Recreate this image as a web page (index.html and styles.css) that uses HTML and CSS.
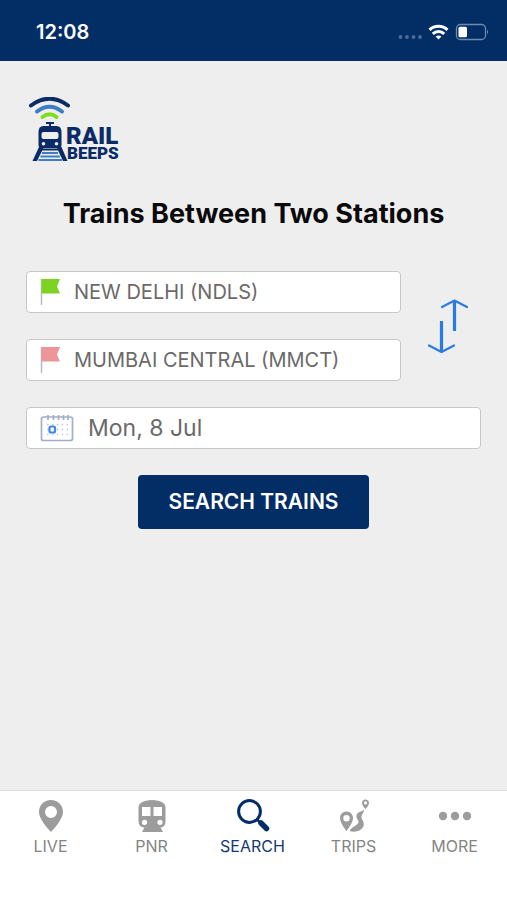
FILE: index.html
```html
<!DOCTYPE html>
<html lang="en">
<head>
<meta charset="utf-8">
<meta name="viewport" content="width=device-width, initial-scale=1">
<title>Rail Beeps</title>
<link rel="stylesheet" href="styles.css">
</head>
<body>
<header class="status">
  <span class="status-time">12:08</span>
  <svg class="status-icons" width="94" height="20" viewBox="0 0 94 20" aria-hidden="true">
    <g fill="#4d6c9b"><circle cx="5.500" cy="15" r="1.900"/><circle cx="12" cy="15" r="1.900"/><circle cx="18.500" cy="15" r="1.900"/><circle cx="25" cy="15" r="1.900"/></g>
    <g fill="none" stroke="#fff" stroke-width="3"><path d="M34.500 7.800a13 13 0 0 1 18 0"/><path d="M37.800 11.900a8.200 8.200 0 0 1 11.400 0"/></g>
    <path d="M40.600 14.600a4.500 4.500 0 0 1 5.800 0l-2.900 3z" fill="#fff"/>
    <rect x="61.500" y="2.500" width="29" height="15" rx="4" fill="none" stroke="#7189b0" stroke-width="1.300"/>
    <rect x="63.500" y="4.700" width="8.500" height="10.600" rx="1.500" fill="#fff"/>
    <path d="M92 7.500q2 2.500 0 5z" fill="#7189b0"/>
  </svg>
</header>

<main class="page">
  <svg class="logo" width="94" height="68" viewBox="0 0 94 68" role="img" aria-label="Rail Beeps">
    <g fill="none" stroke-width="4" stroke-linecap="round">
      <path d="M3 8.500Q21.500 -5 40 8.500" stroke="#0a2b66"/>
      <path d="M9 14.500Q21.500 5 34 14.500" stroke="#3e7dc2"/>
      <path d="M14.500 20Q21.500 14.500 28.500 20" stroke="#80de20"/>
    </g>
    <g fill="#0a2b66">
      <path d="M18 25h8v2h-3v3h-2v-3h-3z"/>
      <path fill-rule="evenodd" d="M15.500 29h13q5 0 5 6v13q0 3-3 3h-17q-3 0-3-3V35q0-6 5-6zM15.500 35q-2 0-2 2v3q0 2 2 2h13q2 0 2-2v-3q0-2-2-2zM15.500 45a1.800 1.800 0 0 0 0 3.600 1.800 1.800 0 0 0 0-3.600zM28.500 45a1.800 1.800 0 0 0 0 3.600 1.800 1.800 0 0 0 0-3.600z"/>
      <path d="M11 50h5L9 64H4.500zM28.500 50h5l6 14H35z"/>
    </g>
    <path d="M14 52.500h16" stroke="#0a2b66" stroke-width="2"/>
    <path d="M14 56h16M12.500 59.500h19.500M10.500 63h23.500" stroke="#3e7dc2" stroke-width="2"/>
    <text class="logo-rail" x="38" y="47">RAIL</text>
    <text class="logo-beeps" x="39" y="62">BEEPS</text>
  </svg>

  <h1 class="title">Trains Between Two Stations</h1>

  <form class="search">
    <div class="route">
      <div class="stations">
        <label class="field">
          <svg width="20" height="28" viewBox="0 0 20 28" aria-hidden="true"><path d="M1.500 1v26" stroke="#b4b9c6" stroke-width="1.500"/><path d="M1.500 1H20l-3 7.500 3 7H1.500z" fill="#7ed321"/></svg>
          <input class="field-input" type="text" value="NEW DELHI (NDLS)" aria-label="From station">
        </label>
        <label class="field">
          <svg width="20" height="28" viewBox="0 0 20 28" aria-hidden="true"><path d="M1.500 1v26" stroke="#b4b9c6" stroke-width="1.500"/><path d="M1.500 1H20l-3 7.500 3 7H1.500z" fill="#ee959a"/></svg>
          <input class="field-input" type="text" value="MUMBAI CENTRAL (MMCT)" aria-label="To station">
        </label>
      </div>
      <button class="swap" type="button" aria-label="Swap stations">
        <svg width="40" height="56" viewBox="0 0 40 56" fill="none" stroke="#2a7ae0" stroke-linecap="round" aria-hidden="true"><path d="M26.500 2.500V33M13.500 23v30.500" stroke-width="3.200" stroke-linecap="butt"/><path d="M14 9l12.500-6.500L39 9M1 47.500l12.500 6.500L26 47.500" stroke-width="2.200"/></svg>
      </button>
    </div>
    <label class="field field-date">
      <svg width="34" height="28" viewBox="0 0 34 28" fill="none" aria-hidden="true">
        <rect x="1.500" y="3" width="31" height="23.500" rx="2" stroke="#a4aecb" stroke-width="1.700"/>
        <path d="M8 1v5M13.500 1v5M18.500 1v5M23.500 1v5M28 1v5" stroke="#a4aecb" stroke-width="1.700"/>
        <path d="M7 10.500h21M7 15.500h21M7 20.500h21" stroke="#bcc5dc" stroke-width="1.500" stroke-dasharray="1.500 3.400"/>
        <rect x="9.500" y="12.500" width="5.500" height="6" rx="1.500" fill="#fff" stroke="#4288ec" stroke-width="2.200"/>
      </svg>
      <input class="field-input" type="text" value="Mon, 8 Jul" aria-label="Journey date">
    </label>
    <button class="submit" type="submit">SEARCH TRAINS</button>
  </form>
</main>

<nav class="tabs" aria-label="Main">
  <a class="tab" href="#live">
    <svg width="34" height="34" viewBox="0 0 34 34" aria-hidden="true"><path fill-rule="evenodd" d="M17 1C10 1 5 6 5 13c0 8 12 20 12 20s12-12 12-20C29 6 24 1 17 1zm0 6a6 6 0 1 1 0 12 6 6 0 0 1 0-12z"/></svg>
    LIVE
  </a>
  <a class="tab" href="#pnr">
    <svg width="34" height="34" viewBox="0 0 34 34" aria-hidden="true"><path fill-rule="evenodd" d="M10 2Q17 .200 24 2q6.500 1.500 6.500 6.500v14q0 5.500-5 6l2.500 4.500H7l2.500-4.500q-6-.5-6-6v-14Q3.500 3.500 10 2zM7 8v9h8.500V8zM18.500 8v9H27V8zM9.500 20.700a2.600 2.600 0 0 0 0 5.200 2.600 2.600 0 0 0 0-5.200zM25 20.700a2.600 2.600 0 0 0 0 5.200 2.600 2.600 0 0 0 0-5.200z"/></svg>
    PNR
  </a>
  <a class="tab tab-active" href="#search" aria-current="page">
    <svg width="34" height="34" viewBox="0 0 34 34" fill="none" stroke="#022d68" aria-hidden="true"><circle cx="13.500" cy="12.500" r="10.900" stroke-width="3"/><path d="M21 20.500l4 4" stroke-width="2.500"/><path d="M25 24l5.500 5.500" stroke-width="5.500" stroke-linecap="round"/></svg>
    SEARCH
  </a>
  <a class="tab" href="#trips">
    <svg width="34" height="34" viewBox="0 0 34 34" aria-hidden="true">
      <path fill-rule="evenodd" d="M9.500 12.500C5.500 12.500 3 15.500 3 19c0 5 6.500 13 6.500 13S16 24 16 19c0-3.500-2.500-6.500-6.500-6.500zm0 3.500a3.200 3.200 0 1 1 0 6.400 3.200 3.200 0 0 1 0-6.400z"/>
      <path fill-rule="evenodd" d="M28.500.5c-2 0-3.500 1.500-3.500 3.500 0 2.500 3.500 6 3.500 6S32 6.500 32 4c0-2-1.500-3.500-3.500-3.500zm0 1.800a1.600 1.600 0 1 1 0 3.200 1.600 1.600 0 0 1 0-3.200z"/>
      <path d="M27 10.500c-2 2.500-7 2-7.500 6-.5 4 3.500 5 1.500 8-1.500 2.500-6 3-8.500 7.500 6 2 12.500-.5 14-5 1.500-5-3-7-2-10 .500-2 2.500-3.500 2.500-6.500z"/>
    </svg>
    TRIPS
  </a>
  <a class="tab" href="#more">
    <svg width="34" height="34" viewBox="0 0 34 34" aria-hidden="true"><circle cx="5" cy="17" r="4.200"/><circle cx="17" cy="17" r="4.200"/><circle cx="29" cy="17" r="4.200"/></svg>
    MORE
  </a>
</nav>
</body>
</html>
```
FILE: styles.css
```css
* { box-sizing: border-box; }

body {
  margin: 0;
  min-height: 100vh;
  display: flex;
  flex-direction: column;
  background: #eee;
  color: #0a0a0a;
  font-family: Inter, "Liberation Sans", sans-serif;
}

svg { display: block; flex: none; }

.status {
  display: flex;
  align-items: center;
  justify-content: space-between;
  padding: 20px 18px 17px 36px;
  background: #022d65;
}

.status-time {
  color: #fff;
  font-size: 20px;
  font-weight: 600;
  line-height: 24px;
}

.page {
  flex: 1;
  padding: 36px 26px 0;
}

.title {
  margin: 32px 0 40px;
  font-size: 27px;
  font-weight: 700;
  line-height: 34px;
  text-align: center;
}

.logo { margin-left: 2px; }

.logo-rail,
.logo-beeps {
  fill: #0a2b66;
  font-family: Roboto, sans-serif;
  font-weight: 900;
}

.logo-rail { font-size: 24px; }
.logo-beeps { font-size: 17px; }

.search {
  display: flex;
  flex-direction: column;
  gap: 26px;
}

.route {
  display: flex;
  align-items: center;
}

.stations {
  flex: 1;
  display: flex;
  flex-direction: column;
  gap: 26px;
}

.field {
  display: flex;
  align-items: center;
  gap: 14px;
  height: 42px;
  padding: 0 13px;
  background: #fff;
  border: 1px solid #c6c6c6;
  border-radius: 4px;
}

.field-input {
  flex: 1;
  min-width: 0;
  padding: 0;
  border: 0;
  outline: 0;
  background: none;
  color: #6a6a6a;
  font: 400 20px/24px Inter, "Liberation Sans", sans-serif;
}

.field-date .field-input { font-size: 23px; }

.swap {
  display: flex;
  justify-content: center;
  margin-right: 16px;
  margin-left: 27px;
  padding: 0;
  border: 0;
  background: none;
}

.submit {
  align-self: center;
  padding: 14px 30px;
  border: 0;
  border-radius: 4px;
  background: #022d65;
  color: #fff;
  font: 600 21px/26px Inter, "Liberation Sans", sans-serif;
}

.tabs {
  display: flex;
  padding: 8px 2px 43px 0;
  background: #fff;
  border-top: 1px solid #ddd;
}

.tab {
  flex: 1;
  display: flex;
  flex-direction: column;
  align-items: center;
  gap: 2px;
  color: #858585;
  font-size: 16px;
  line-height: 22px;
  text-decoration: none;
}

.tab svg { fill: #9c9c9c; }

.tab-active { color: #143a73; }
.tab-active svg { fill: none; }
```
